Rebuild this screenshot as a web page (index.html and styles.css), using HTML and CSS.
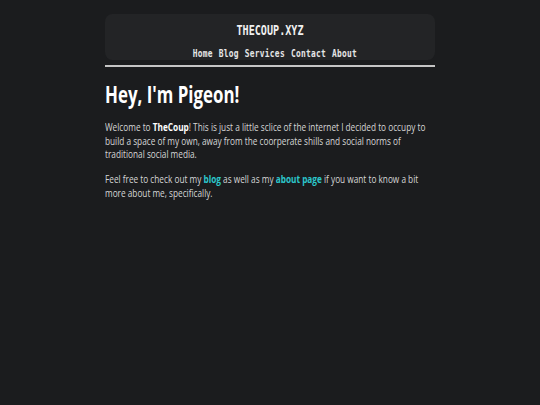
FILE: index.html
```html
<!DOCTYPE html>
<html>
<head>
<meta charset="utf-8">
<link rel="stylesheet" href="styles.css">
</head>
<body>
<div class="frame">
  <div class="viewport">
    <div class="page">
      <header class="site-header">
        <div class="site-title">THECOUP.XYZ</div>
        <nav class="nav">
          <a href="#">Home</a>
          <a href="#">Blog</a>
          <a href="#">Services</a>
          <a href="#">Contact</a>
          <a href="#">About</a>
        </nav>
      </header>
      <div class="rule"></div>
      <main class="content">
        <h1>Hey, I'm Pigeon!</h1>
        <p>Welcome to <strong>TheCoup</strong>! This is just a little sclice of the internet I decided to occupy to build a space of my own, away from the coorperate shills and social norms of traditional social media.</p>
        <p>Feel free to check out my <a href="#">blog</a> as well as my <a href="#">about page</a> if you want to know a bit more about me, specifically.</p>
      </main>
    </div>
  </div>
</div>
</body>
</html>
```
FILE: styles.css
```css
html, body {
  margin: 0;
  padding: 0;
  background: #1b1c1e;
  overflow: hidden;
}
body {
  font-family: "Open Sans", "Noto Sans", sans-serif;
  color: #d6d6d6;
}
.frame {
  width: 540px;
  height: 405px;
  overflow: hidden;
}
.viewport {
  width: 720px;
  height: 405px;
  transform: scaleX(0.75);
  transform-origin: left top;
}
.page {
  width: 440px;
  margin: 14px auto 0;
}
.site-header {
  background: #232426;
  border-radius: 10px / 8px;
  padding: 7px 0 0;
  height: 39px;
  display: flex;
  flex-direction: column;
  align-items: center;
}
.site-title {
  font-family: "DejaVu Sans Mono", monospace;
  font-weight: bold;
  font-size: 13.5px;
  color: #f0f0f0;
  line-height: 18px;
}
.nav {
  margin-top: 7px;
  padding-left: 13px;
  display: flex;
  gap: 8px;
  line-height: 14px;
}
.nav a {
  font-family: "DejaVu Sans Mono", monospace;
  font-weight: bold;
  font-size: 10.5px;
  letter-spacing: 0.35px;
  color: #e6e6e6;
  text-decoration: none;
}
.rule {
  height: 2px;
  background: #c4c4c4;
  margin-top: 5px;
}
.content h1 {
  font-size: 22.5px;
  font-weight: bold;
  color: #ffffff;
  margin: 13px 0 10px;
  line-height: 30px;
}
.content p {
  font-size: 11px;
  line-height: 13.5px;
  margin: 0 0 11.5px;
}
.content strong {
  color: #ffffff;
}
.content a {
  color: #2cc7cb;
  font-weight: bold;
  text-decoration: none;
}
```
